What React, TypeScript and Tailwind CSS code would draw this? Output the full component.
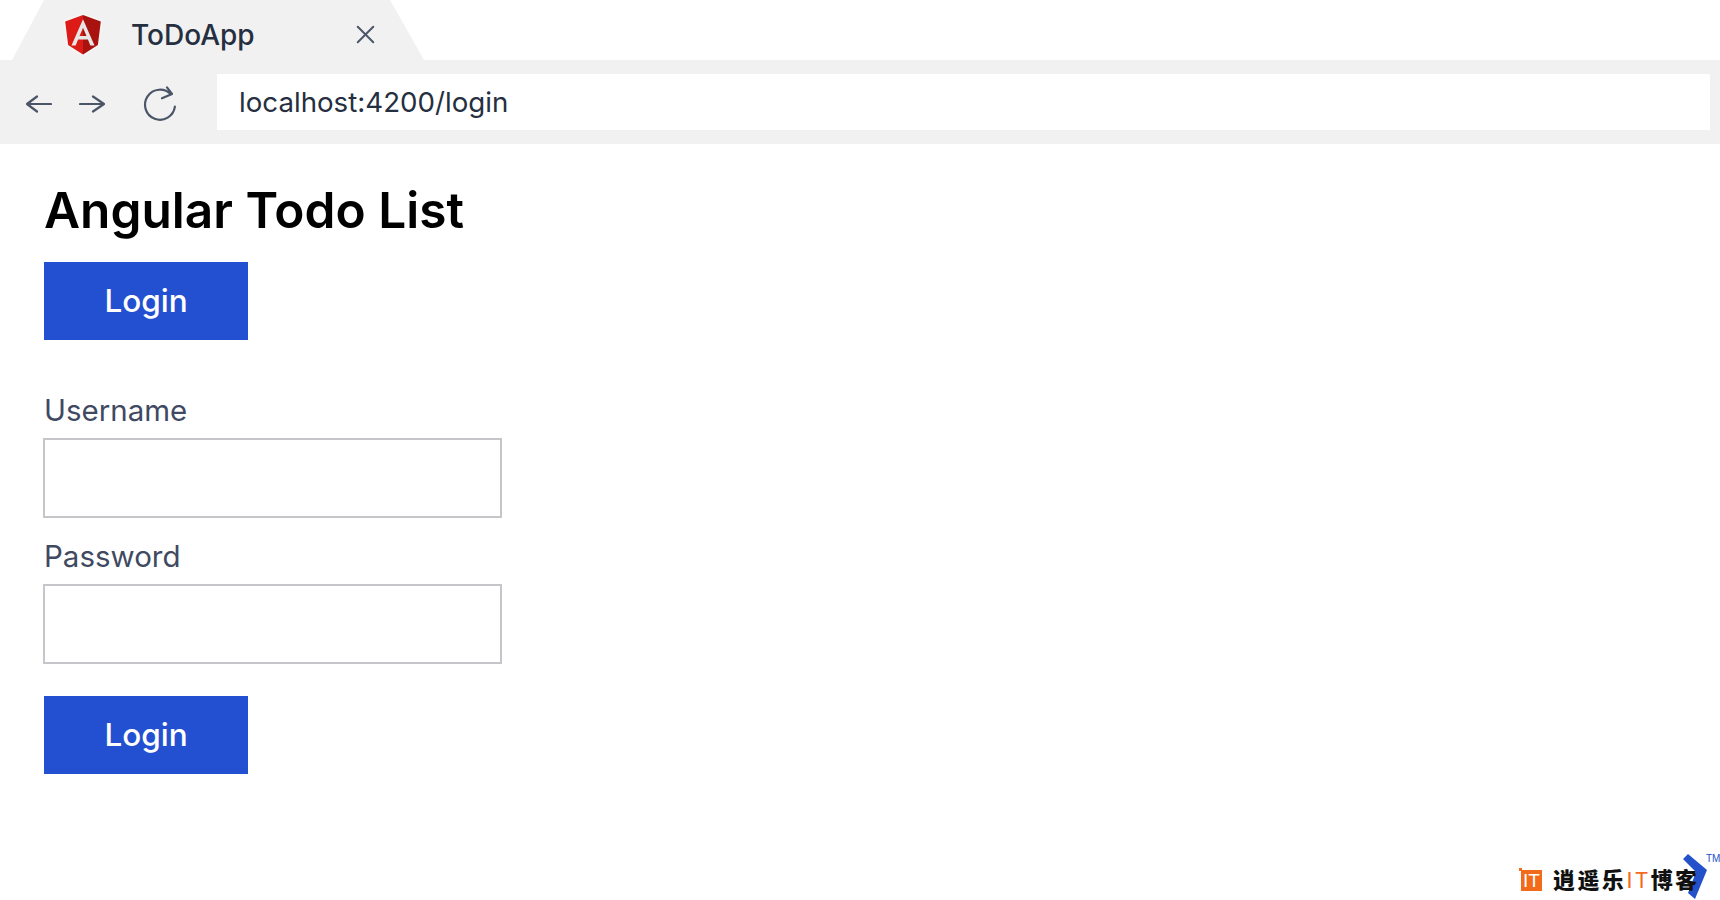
import React from "react";
import { X } from "lucide-react";

function AngularLogo() {
  return (
    <svg width="40" height="44" viewBox="0 0 38 42" className="shrink-0">
      <path d="M19 0.5 L0.5 7 L3.5 31.5 L19 41.5 L34.5 31.5 L37.5 7 Z" fill="#f6f6f6" />
      <path d="M19 2 L2 8 L4.8 30.6 L19 39.6 Z" fill="#dd1b16" />
      <path d="M19 2 L36 8 L33.2 30.6 L19 39.6 Z" fill="#a81310" />
      <path d="M19 6 L8 31 L12 31 L14.3 25.4 L23.7 25.4 L26 31 L30 31 Z M19 14 L22.3 22 L15.7 22 Z" fill="#e6e6e6" fillRule="evenodd" />
    </svg>
  );
}

function BackArrow() {
  return (
    <svg width="26" height="20" viewBox="0 0 26 20" fill="none" stroke="#4a5568" strokeWidth="2.2" strokeLinecap="round" strokeLinejoin="round">
      <path d="M25 10 H1 M11 2.5 L1 10 L11 17.5" />
    </svg>
  );
}

function ForwardArrow() {
  return (
    <svg width="26" height="20" viewBox="0 0 26 20" fill="none" stroke="#4a5568" strokeWidth="2.2" strokeLinecap="round" strokeLinejoin="round">
      <path d="M1 10 H25 M14 2.5 L25 10 L14 17.5" />
    </svg>
  );
}

function Reload() {
  return (
    <svg width="40" height="44" viewBox="0 0 40 44" fill="none" stroke="#4a5568" strokeWidth="2.2" strokeLinecap="round" strokeLinejoin="round">
      <path d="M34.9 23.7 A15 15 0 1 1 31 11.5 M27 4.3 L32 11 L22 15.3" />
    </svg>
  );
}

function Watermark() {
  return (
    <div className="absolute right-0 bottom-0 h-[60px] w-[220px]" aria-hidden="true">
      <div className="absolute left-[19px] top-[28px] h-[3px] w-[3px] bg-[#f26a1b]" />
      <div className="absolute left-[21px] top-[30px] flex h-[21px] w-[21px] items-center justify-center bg-[#f26a1b] text-[19px] leading-none text-white font-['Liberation_Sans',sans-serif]">
        IT
      </div>
      <svg width="25" height="46" viewBox="0 0 25 46" className="absolute left-[183px] top-[14px]">
        <path d="M5 0 L24 16 L12 45 L5 39 L13 18 L0 5 Z" fill="#2450c9" />
      </svg>
      <div className="absolute left-[53px] top-[24px] whitespace-nowrap text-[22px] leading-[28px] font-black tracking-[2.4px] text-[#111] font-['Noto_Sans_CJK_SC',sans-serif]">
        逍遥乐<span className="font-normal text-[#f26a1b]">IT</span>博客
      </div>
      <div className="absolute left-[206px] top-[13px] text-[10px] leading-3 text-[#2450c9] font-['Liberation_Sans',sans-serif]">
        TM
      </div>
    </div>
  );
}

export default function App() {
  return (
    <div className="relative h-[900px] w-full overflow-hidden bg-white font-['Inter',sans-serif]">
      {/* Tab strip */}
      <div className="h-[60px] bg-white">
        <div className="ml-[12px] flex h-[60px] w-[412px] items-center bg-[#f1f1f1] pt-[9px] pl-[51px] [clip-path:polygon(0_100%,32px_0,378px_0,412px_100%)]">
          <AngularLogo />
          <span className="ml-[28px] text-[28px] font-medium text-[#252f3f]">ToDoApp</span>
          <X className="ml-[95px] text-[#4a5568]" size={31} strokeWidth={1.5} />
        </div>
      </div>

      {/* Address bar */}
      <div className="flex h-[84px] items-center bg-[#f1f1f1] pr-[10px] pl-[26px]">
        <div className="mt-[4px]">
          <BackArrow />
        </div>
        <div className="mt-[4px] ml-[27px]">
          <ForwardArrow />
        </div>
        <div className="mt-[5px] ml-[35px]">
          <Reload />
        </div>
        <div className="ml-[37px] flex h-[56px] flex-1 items-center bg-white pt-[2px] pl-[22px] text-[27.7px] text-[#252f3f]">
          localhost:4200/login
        </div>
      </div>

      {/* Page */}
      <div className="pl-[44px]">
        <h1 className="mt-[36px] text-[49.6px] leading-[61px] font-semibold text-black">Angular Todo List</h1>
        <button className="mt-[21px] block h-[78px] w-[204px] bg-[#2350d0] text-[31.5px] font-medium text-white">Login</button>
        <div className="mt-[48px] text-[29.5px] leading-[44px] text-[#3f4a62]">Username</div>
        <input className="-ml-px mt-[6px] block h-[80px] w-[459px] border-2 border-[#c6c6ca] bg-white" />
        <div className="mt-[16px] text-[29.5px] leading-[44px] text-[#3f4a62]">Password</div>
        <input className="-ml-px mt-[6px] block h-[80px] w-[459px] border-2 border-[#c6c6ca] bg-white" />
        <button className="mt-[32px] block h-[78px] w-[204px] bg-[#2350d0] text-[31.5px] font-medium text-white">Login</button>
      </div>

      <Watermark />
    </div>
  );
}
